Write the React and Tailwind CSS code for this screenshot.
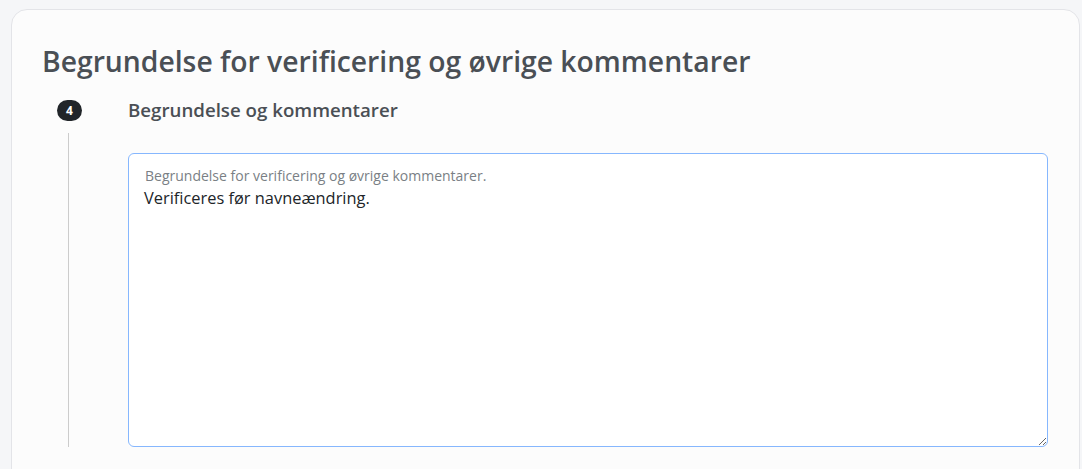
import React, { useState } from 'react';

const App = () => {
  const [text, setText] = useState('Verificeres før navneændring.');

  return (
    <div className="min-h-screen bg-[#f5f6f8] pt-[9px] pl-[11px] pr-[2px] font-['Open_Sans',sans-serif]">
      <div className="bg-[#fcfcfc] border border-[#e3e4e8] rounded-[16px] pt-[34px] pl-[30px] pr-[30px] pb-[40px]">
        {/* Section title */}
        <h2 className="text-[28.3px] leading-[34px] font-semibold text-[#4a4f55]">
          Begrundelse for verificering og øvrige kommentarer
        </h2>

        {/* Step 4 */}
        <div className="flex mt-[22px]">
          <div className="w-[86px] shrink-0 flex flex-col">
            <div className="ml-[15px] w-[25px] h-[21px] rounded-full bg-[#212529] text-white text-[12px] font-bold flex items-center justify-center">
              4
            </div>
            <div className="ml-[26px] mt-[12px] w-px flex-1 bg-[#cccccc]"></div>
          </div>

          <div className="flex-1 mr-[1px]">
            <h3 className="text-[18.7px] leading-[20px] font-semibold text-[#4a4f55]">
              Begrundelse og kommentarer
            </h3>

            <div className="relative mt-[33px] h-[294px] bg-white border border-[#86b7fe] rounded-[6px]">
              <label className="absolute left-[16px] top-[11px] text-[14px] text-[#7a7f85] pointer-events-none">
                Begrundelse for verificering og øvrige kommentarer.
              </label>
              <textarea
                value={text}
                onChange={(e) => setText(e.target.value)}
                className="w-full h-full resize-y bg-transparent rounded-[6px] pt-[32px] px-[15px] text-[16.4px] leading-[24px] text-[#212529] outline-none"
              />
            </div>
          </div>
        </div>
      </div>
    </div>
  );
};

export default App;
